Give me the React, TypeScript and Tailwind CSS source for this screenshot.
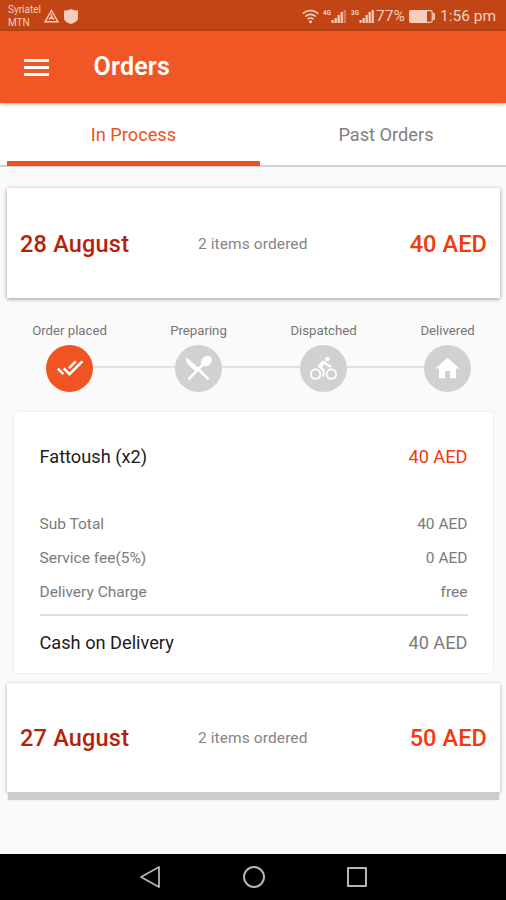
import { Fragment } from 'react'
import { MdDirectionsBike, MdHome } from 'react-icons/md'
import { clsx } from 'clsx'

function DoubleCheck() {
  return (
    <svg width="28" height="18" viewBox="0 0 28 18" fill="none" stroke="currentColor" strokeWidth="2.6">
      <path d="M1.8 9.6 7.4 15.2M7.8 9.4l5.7 5.7L26.4 2.3M12.8 9.4 19.8 2.3" />
    </svg>
  )
}

function Utensils() {
  return (
    <svg width="30" height="26" viewBox="0 0 30 26" fill="currentColor">
      <path d="M2.8 2.4 14.6 13.2 11.3 16.2 4.2 9.6Q.6 6.2 2.8 2.4z" />
      <ellipse cx="22.4" cy="6.1" rx="5.8" ry="4.8" transform="rotate(-40 22.4 6.1)" />
      <path d="M19 9.4 5.2 23.6M13.5 13.2 23.8 23.6" stroke="currentColor" strokeWidth="2.7" strokeLinecap="round" />
    </svg>
  )
}

const steps = [
  { label: 'Order placed', icon: <DoubleCheck />, done: true, line: 'w-[83px]' },
  { label: 'Preparing', icon: <Utensils />, line: 'w-[79px]' },
  { label: 'Dispatched', icon: <MdDirectionsBike size={27} />, line: 'w-[78px]' },
  { label: 'Delivered', icon: <MdHome size={29} /> },
]

const fees = [
  { label: 'Sub Total', value: '40 AED' },
  { label: 'Service fee(5%)', value: '0 AED' },
  { label: 'Delivery Charge', value: 'free' },
]

function Signal({ network, weak }: { network: string; weak?: boolean }) {
  return (
    <svg width="24" height="18" viewBox="0 0 24 18" fill="currentColor">
      <text x="0" y="7.5" fontSize="8" fontWeight="700" textLength="8" lengthAdjust="spacingAndGlyphs">{network}</text>
      <rect x="8.5" y="13" width="2.2" height="3" />
      <rect x="11.6" y="11" width="2.2" height="5" />
      <rect x="14.6" y="8" width="2.2" height="8" />
      <rect x="17.6" y="5" width="2.2" height="11" />
      <rect x="20.6" y="3" width="2.2" height="13" opacity={weak ? 0.45 : 1} />
    </svg>
  )
}

function StatusBar() {
  return (
    <div className="flex h-[31px] items-center bg-[#c14515] pl-2 pr-2.5 pt-px text-[#f8cdbd]">
      <div className="w-9 text-[10px] leading-[13px]">
        <div>Syriatel</div>
        <div>MTN</div>
      </div>
      <svg width="15" height="14" viewBox="0 0 15 14" fill="none" stroke="currentColor" strokeWidth="1.4">
        <path d="M7.5 1.5 14 12.8H1z" />
        <path d="M7.5 5v5M5 10.5l2.5-3 2.5 3" />
      </svg>
      <svg className="ml-[5px]" width="14" height="15" viewBox="0 0 14 15" fill="currentColor">
        <path d="M0 1.5Q4 1.5 7 0q3 1.5 7 1.5V9c0 3-3.5 5-7 6-3.5-1-7-3-7-6z" />
      </svg>
      <svg className="ml-auto" width="17" height="15" viewBox="0 0 17 15" fill="none" stroke="currentColor" strokeWidth="1.6">
        <path d="M.7 4.7q7.8-6.4 15.6 0M3.2 7.5q5.3-4.3 10.6 0M5.5 10.2q3-2.4 6 0" />
        <circle cx="8.5" cy="12.8" r="1.5" fill="currentColor" stroke="none" />
      </svg>
      <div className="ml-1 flex gap-1">
        <Signal network="4G" weak />
        <Signal network="3G" />
      </div>
      <span className="ml-px w-[29px] whitespace-nowrap pt-px text-[15.5px]">77%</span>
      <svg className="ml-1" width="27" height="13" viewBox="0 0 27 13" fill="none" stroke="currentColor">
        <rect x=".7" y=".7" width="22.5" height="11.6" rx="1.5" strokeWidth="1.2" />
        <rect x="1" y="1" width="16.5" height="11" fill="currentColor" />
        <path d="M25 3v7" strokeWidth="1.8" />
      </svg>
      <span className="ml-1 whitespace-nowrap pt-px text-[15.5px]">1:56 pm</span>
    </div>
  )
}

function OrderCard({ date, total, last }: { date: string; total: string; last?: boolean }) {
  return (
    <div
      className={clsx(
        'ml-[7px] mr-1.5 flex items-center bg-white px-[13px]',
        last
          ? 'h-[109px] pt-0.5 shadow-[0_9px_1px_-1px_#cccccc,0_1px_4px_rgba(0,0,0,0.3)]'
          : 'h-[110px] pt-[3px] shadow-[0_1px_4px_rgba(0,0,0,0.4)]',
      )}
    >
      <span className="w-[178px] text-[23.5px] font-medium tracking-[0.2px] text-[#b81f0b]">{date}</span>
      <span className="text-[15.5px] tracking-[0.1px] text-[#858585]">2 items ordered</span>
      <span className="ml-auto text-[23.5px] font-medium tracking-[0.1px] text-[#ef3b0e]">{total}</span>
    </div>
  )
}

function Tracker() {
  return (
    <div className="mt-[23px] flex pl-[46px]">
      {steps.map(({ label, icon, done, line }) => (
        <Fragment key={label}>
          <div className="flex w-[47px] shrink-0 flex-col items-center">
            <span className="h-6 whitespace-nowrap text-[13.2px] leading-[20px] text-[#757575]">{label}</span>
            <div className={clsx('flex size-[46.5px] items-center justify-center rounded-full text-white', done ? 'bg-[#f05423]' : 'bg-[#d1d1d1]')}>
              {icon}
            </div>
          </div>
          {line && <div className={clsx('-mr-px mt-[45px] h-0.5 shrink-0 bg-[#e1e1e1]', line)} />}
        </Fragment>
      ))}
    </div>
  )
}

function OrderDetails() {
  return (
    <div className="ml-[14px] mr-[13px] mt-[20.5px] h-[261px] rounded-sm bg-white px-[25.5px] shadow-[0_0_3px_rgba(0,0,0,0.1)]">
      <div className="flex justify-between pt-[31px] text-[18.2px] leading-7">
        <span className="text-[#1c1c1c]">Fattoush (x2)</span>
        <span className="text-[#ef3b0e]">40 AED</span>
      </div>
      <div className="mt-9 h-[109px] border-b-2 border-[#dedede] pt-px">
        {fees.map((fee) => (
          <div key={fee.label} className="flex h-[34px] items-center justify-between text-[15.5px] text-[#7b7b7b]">
            <span>{fee.label}</span>
            <span>{fee.value}</span>
          </div>
        ))}
      </div>
      <div className="mt-[13px] flex justify-between text-[18.2px] leading-7">
        <span className="text-[#1c1c1c]">Cash on Delivery</span>
        <span className="text-[#7b7b7b]">40 AED</span>
      </div>
    </div>
  )
}

export default function App() {
  return (
    <div className="flex h-[900px] w-[506px] flex-col overflow-hidden bg-[#fafafa] font-['Roboto',sans-serif]">
      <StatusBar />
      <header className="z-10 flex h-[72px] shrink-0 items-center bg-[#f15725] pl-6 text-white shadow-[0_1px_4px_rgba(0,0,0,0.35)]">
        <div className="flex w-[25px] flex-col gap-[4px]">
          <div className="h-[3px] bg-white" />
          <div className="h-[3px] bg-white" />
          <div className="h-[3px] bg-white" />
        </div>
        <h1 className="ml-[44.5px] text-[25px] font-semibold tracking-[0.2px]">Orders</h1>
      </header>
      <nav className="flex h-16 shrink-0 border-b-2 border-[#d2d2d2] bg-white pl-[7px] text-[18.2px]">
        <div className="-mb-px flex w-[253px] items-center justify-center border-b-[5px] border-[#ee5120] pt-1.5 text-[#ee5120]">In Process</div>
        <div className="flex flex-1 items-center justify-center pl-1.5 pt-0.5 text-[#808080]">Past Orders</div>
      </nav>
      <main className="flex-1 pt-[21px]">
        <OrderCard date="28 August" total="40 AED" />
        <Tracker />
        <OrderDetails />
        <div className="h-2.5" />
        <OrderCard date="27 August" total="50 AED" last />
      </main>
      <div className="flex h-[46px] shrink-0 items-center justify-center gap-[82px] bg-black">
        <svg width="22" height="24" viewBox="0 0 22 24" fill="none" stroke="#b5b5b5" strokeWidth="1.8" strokeLinejoin="round">
          <path d="M20 2v20L2 12z" />
        </svg>
        <div className="size-[22px] rounded-full border-2 border-[#b5b5b5]" />
        <div className="size-5 rounded-[1px] border-2 border-[#b5b5b5]" />
      </div>
    </div>
  )
}
